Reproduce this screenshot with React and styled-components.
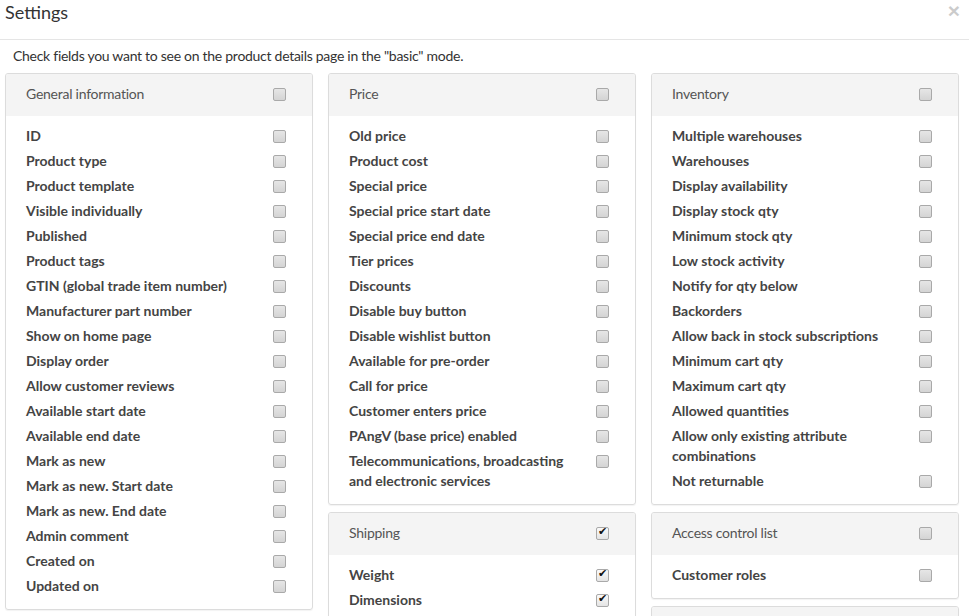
import React from "react";
import styled, { createGlobalStyle } from "styled-components";

const GlobalStyle = createGlobalStyle`
  html, body {
    margin: 0;
    padding: 0;
    background: #fff;
    overflow: hidden;
  }
  body {
    font-family: "Lato", "Open Sans", sans-serif;
    color: #333;
  }
`;

const sections = [
  [
    {
      title: "General information",
      items: [
        "ID", "Product type", "Product template", "Visible individually", "Published",
        "Product tags", "GTIN (global trade item number)", "Manufacturer part number",
        "Show on home page", "Display order", "Allow customer reviews", "Available start date",
        "Available end date", "Mark as new", "Mark as new. Start date", "Mark as new. End date",
        "Admin comment", "Created on", "Updated on",
      ],
    },
  ],
  [
    {
      title: "Price",
      items: [
        "Old price", "Product cost", "Special price", "Special price start date",
        "Special price end date", "Tier prices", "Discounts", "Disable buy button",
        "Disable wishlist button", "Available for pre-order", "Call for price",
        "Customer enters price", "PAngV (base price) enabled",
        "Telecommunications, broadcasting and electronic services",
      ],
    },
    {
      title: "Shipping",
      checked: true,
      items: ["Weight", "Dimensions", "Delivery date", "Free shipping", "Ship separately"],
    },
  ],
  [
    {
      title: "Inventory",
      items: [
        "Multiple warehouses", "Warehouses", "Display availability", "Display stock qty",
        "Minimum stock qty", "Low stock activity", "Notify for qty below", "Backorders",
        "Allow back in stock subscriptions", "Minimum cart qty", "Maximum cart qty",
        "Allowed quantities", "Allow only existing attribute combinations", "Not returnable",
      ],
    },
    { title: "Access control list", items: ["Customer roles"] },
    { title: "Stores", items: ["Limited to stores"] },
  ],
];

export default function App() {
  return (
    <Modal>
      <GlobalStyle />
      <Header>
        <Title>Settings</Title>
        <Close>×</Close>
      </Header>
      <Intro>Check fields you want to see on the product details page in the "basic" mode.</Intro>
      <Columns>
        {sections.map((col, i) => (
          <Column key={i}>
            {col.map((card) => (
              <Card key={card.title}>
                <CardHead>
                  <CardTitle>{card.title}</CardTitle>
                  <Check checked={!!card.checked} head />
                </CardHead>
                <CardBody>
                  {card.items.map((item) => (
                    <Row key={item}>
                      <Label>{item}</Label>
                      <Check checked={!!card.checked} />
                    </Row>
                  ))}
                </CardBody>
              </Card>
            ))}
          </Column>
        ))}
      </Columns>
    </Modal>
  );
}

function Check({ checked, head }) {
  return (
    <Box $checked={checked} $head={head}>
      {checked && <Tick>✔</Tick>}
    </Box>
  );
}

const Modal = styled.div`
  width: 969px;
`;

const Header = styled.div`
  display: flex;
  align-items: center;
  justify-content: space-between;
  height: 40px;
  padding: 0 5px;
  border-bottom: 1px solid #e5e5e5;
  box-sizing: border-box;
  position: relative;
`;

const Title = styled.h4`
  margin: 0 0 16px;
  font-size: 18px;
  font-weight: 400;
  color: #333;
`;

const Close = styled.span`
  position: absolute;
  right: 9px;
  top: 0;
  font-size: 21px;
  line-height: 21px;
  font-weight: 700;
  color: #000;
  opacity: 0.2;
  font-family: "Liberation Sans", sans-serif;
`;

const Intro = styled.p`
  margin: 6px 0 0 13px;
  line-height: 20px;
  font-size: 14px;
  letter-spacing: -0.28px;
  color: #333;
`;

const Columns = styled.div`
  display: grid;
  grid-template-columns: repeat(3, 308px);
  column-gap: 15px;
  padding: 7px 0 0 5px;
  align-items: start;
`;

const Column = styled.div`
  display: flex;
  flex-direction: column;
  gap: 7px;
`;

const Card = styled.div`
  border: 1px solid #dcdcdc;
  border-radius: 3px;
  box-shadow: 0 1px 1px rgba(0, 0, 0, 0.05);
  overflow: hidden;
`;

const CardHead = styled.div`
  display: flex;
  align-items: center;
  justify-content: space-between;
  height: 42px;
  padding: 0 26px 0 20px;
  background: #f4f4f4;
`;

const CardTitle = styled.span`
  font-size: 14px;
  letter-spacing: -0.25px;
  color: #555;
  margin-bottom: 4px;
`;

const CardBody = styled.div`
  display: flex;
  flex-direction: column;
  gap: 5px;
  padding: 10px 26px 13px 20px;
`;

const Row = styled.div`
  display: flex;
  align-items: flex-start;
  justify-content: space-between;
`;

const Label = styled.span`
  font-size: 14px;
  line-height: 20px;
  font-weight: 700;
  color: #444;
  max-width: 230px;
`;

const Box = styled.span`
  flex: none;
  position: relative;
  width: 11px;
  height: 11px;
  margin: ${(p) => (p.$head ? "0 0 2px" : "4px 0 0")};
  border: 1px solid #a9a9a9;
  border-radius: 2px;
  background: ${(p) => (p.$checked ? "linear-gradient(#fafafa, #e4e4e4)" : "linear-gradient(#e6e6e6, #d4d4d4)")};
`;

const Tick = styled.span`
  position: absolute;
  left: 1px;
  top: -3px;
  font-size: 11px;
  color: #111;
  font-family: "DejaVu Sans", sans-serif;
`;
